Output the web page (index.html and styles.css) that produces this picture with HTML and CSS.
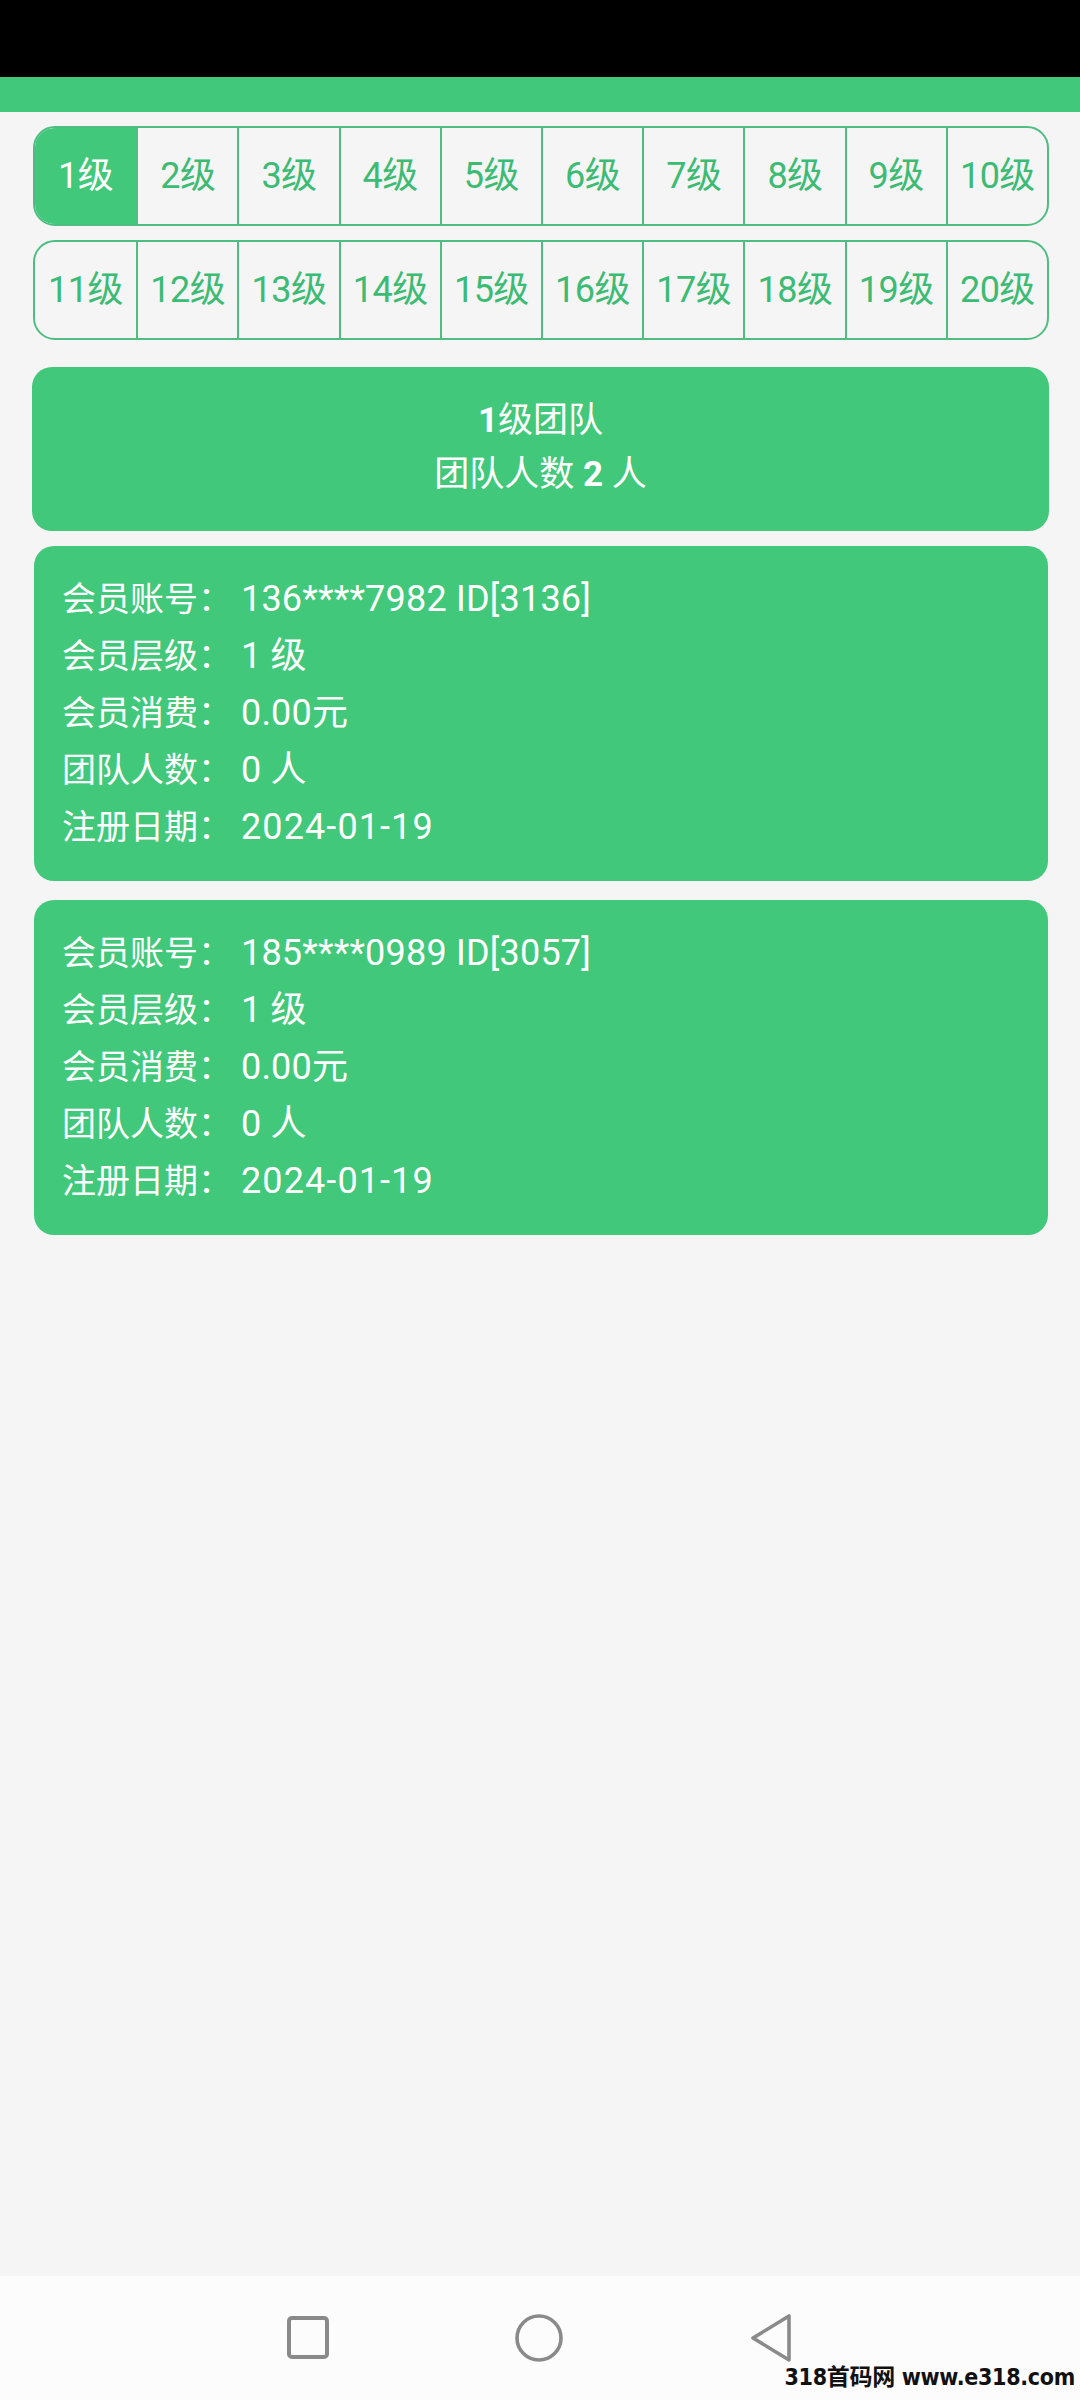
FILE: index.html
```html
<!DOCTYPE html>
<html lang="zh-CN">
<head>
<meta charset="utf-8">
<title>团队</title>
<link rel="stylesheet" href="styles.css">
</head>
<body>
<div class="screen">
  <div class="status-bar"></div>
  <div class="title-bar"></div>
  <main class="content">
    <div class="tabs">
      <div class="tab active">1级</div>
      <div class="tab">2级</div>
      <div class="tab">3级</div>
      <div class="tab">4级</div>
      <div class="tab">5级</div>
      <div class="tab">6级</div>
      <div class="tab">7级</div>
      <div class="tab">8级</div>
      <div class="tab">9级</div>
      <div class="tab">10级</div>
    </div>
    <div class="tabs">
      <div class="tab">11级</div>
      <div class="tab">12级</div>
      <div class="tab">13级</div>
      <div class="tab">14级</div>
      <div class="tab">15级</div>
      <div class="tab">16级</div>
      <div class="tab">17级</div>
      <div class="tab">18级</div>
      <div class="tab">19级</div>
      <div class="tab">20级</div>
    </div>

    <section class="summary">
      <div class="summary-line"><b>1</b>级团队</div>
      <div class="summary-line">团队人数 <b>2</b> 人</div>
    </section>

    <section class="member">
      <div class="row"><span class="label">会员账号：</span><span class="val">136****7982 ID[3136]</span></div>
      <div class="row"><span class="label">会员层级：</span><span class="val">1 级</span></div>
      <div class="row"><span class="label">会员消费：</span><span class="val">0.00元</span></div>
      <div class="row"><span class="label">团队人数：</span><span class="val">0 人</span></div>
      <div class="row"><span class="label">注册日期：</span><span class="val date">2024-01-19</span></div>
    </section>

    <section class="member">
      <div class="row"><span class="label">会员账号：</span><span class="val">185****0989 ID[3057]</span></div>
      <div class="row"><span class="label">会员层级：</span><span class="val">1 级</span></div>
      <div class="row"><span class="label">会员消费：</span><span class="val">0.00元</span></div>
      <div class="row"><span class="label">团队人数：</span><span class="val">0 人</span></div>
      <div class="row"><span class="label">注册日期：</span><span class="val date">2024-01-19</span></div>
    </section>
  </main>

  <nav class="nav-bar">
    <svg class="nav-icon" width="48" height="48" viewBox="0 0 48 48"><rect x="5" y="4" width="38" height="39" rx="3" fill="none" stroke="#8a8a8a" stroke-width="4"/></svg>
    <svg class="nav-icon" width="52" height="52" viewBox="0 0 52 52"><circle cx="26" cy="26" r="22" fill="none" stroke="#8a8a8a" stroke-width="3.6"/></svg>
    <svg class="nav-icon" width="52" height="52" viewBox="0 0 52 52"><path d="M44 4 L44 48 L8 26 Z" fill="none" stroke="#8a8a8a" stroke-width="3.6" stroke-linejoin="round"/></svg>
    <div class="watermark">318首码网 www.e318.com</div>
  </nav>
</div>
</body>
</html>
```
FILE: styles.css
```css
* { box-sizing: border-box; }

html, body {
  margin: 0;
  padding: 0;
}

body {
  width: 1080px;
  height: 2400px;
  background: #f5f5f5;
  font-family: Roboto, "Noto Sans CJK SC", sans-serif;
  overflow: hidden;
}

.screen {
  width: 1080px;
  height: 2400px;
  display: flex;
  flex-direction: column;
}

.status-bar {
  height: 77px;
  background: #000;
  flex: none;
}

.title-bar {
  height: 35px;
  background: #41c87b;
  flex: none;
}

.content {
  flex: 1;
  display: flex;
  flex-direction: column;
  padding: 14px 31px 0 33px;
}

.tabs {
  display: grid;
  grid-template-columns: repeat(10, 1fr);
  height: 100px;
  border: 2px solid #4fbd82;
  border-radius: 22px;
  overflow: hidden;
  margin-bottom: 14px;
}

.tab {
  display: flex;
  align-items: center;
  justify-content: center;
  padding-bottom: 8px;
  font-size: 36px;
  color: #3cbb74;
  border-left: 2px solid #4fbd82;
  letter-spacing: -0.5px;
  white-space: nowrap;
}

.tab:first-child {
  border-left: none;
}

.tab.active {
  background: #41c87b;
  color: #ffffff;
}

.summary {
  margin: 13px 0 15px -1px;
  background: #41c87b;
  border-radius: 20px;
  height: 164px;
  display: flex;
  flex-direction: column;
  justify-content: center;
  align-items: center;
  padding-bottom: 2px;
  color: #ffffff;
  font-size: 35px;
}

.summary-line {
  line-height: 54px;
}

.summary-line b {
  font-weight: 700;
}

.member {
  margin: 0 1px 19px 1px;
  background: #41c87b;
  border-radius: 20px;
  padding: 25px 28px 25px 28px;
  color: #ffffff;
  font-size: 34px;
}

.row {
  height: 57px;
  line-height: 57px;
  display: flex;
  align-items: baseline;
  white-space: nowrap;
}

.label {
  flex: none;
}

.val {
  margin-left: 9px;
  font-size: 36px;
  letter-spacing: 0.2px;
}

.val.date {
  letter-spacing: 1.1px;
}

.nav-bar {
  flex: none;
  height: 124px;
  background: #fcfcfc;
  display: flex;
  justify-content: center;
  align-items: flex-start;
  position: relative;
  padding-top: 36px;
}

.nav-icon {
  display: block;
}

.nav-icon:nth-child(1) {
  margin-right: 181px;
  margin-top: 2px;
}

.nav-icon:nth-child(2) {
  margin-right: 180px;
}

.watermark {
  position: absolute;
  right: 5px;
  bottom: 8px;
  font-family: "Liberation Sans Narrow", "DejaVu Sans Condensed", "Noto Sans CJK SC", sans-serif;
  font-weight: 700;
  font-size: 23px;
  color: #111;
  letter-spacing: -0.3px;
}
```
